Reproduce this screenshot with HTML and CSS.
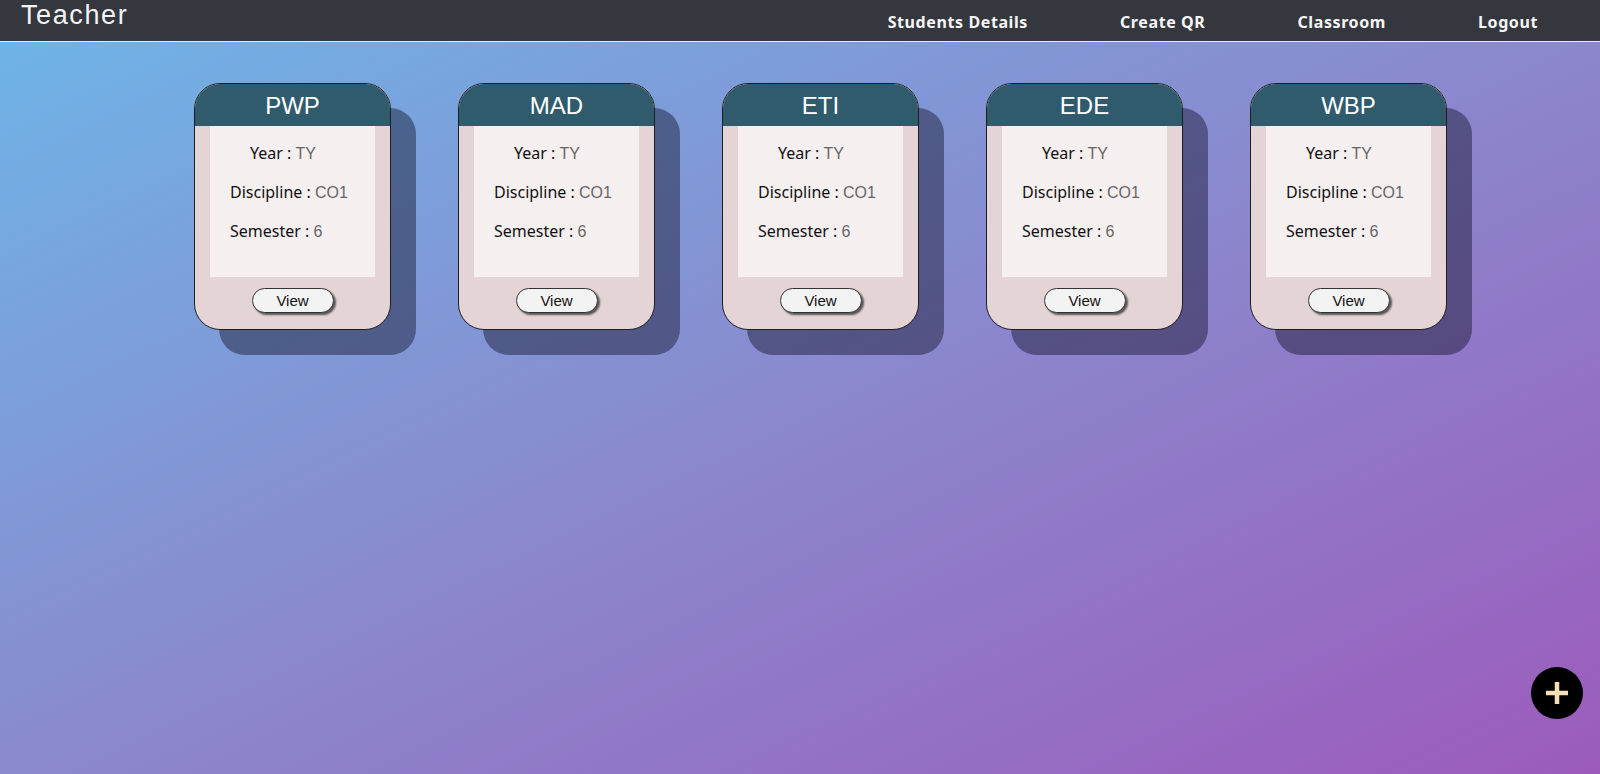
FILE: index.html
```html
<!DOCTYPE html>
<html>
<head>
<meta charset="utf-8">
<title>Teacher</title>
<link rel="stylesheet" href="styles.css">
</head>
<body>
<header class="navbar">
  <div class="brand">Teacher</div>
  <nav class="links">
    <a href="#">Students Details</a>
    <a href="#">Create QR</a>
    <a href="#">Classroom</a>
    <a href="#">Logout</a>
  </nav>
</header>
<main class="cards">
  <div class="card">
    <div class="card-head">PWP</div>
    <div class="card-panel">
      <p class="row row-year">Year : <span>TY</span></p>
      <p class="row">Discipline : <span>CO1</span></p>
      <p class="row">Semester : <span>6</span></p>
    </div>
    <div class="card-foot"><button class="view">View</button></div>
  </div>
  <div class="card">
    <div class="card-head">MAD</div>
    <div class="card-panel">
      <p class="row row-year">Year : <span>TY</span></p>
      <p class="row">Discipline : <span>CO1</span></p>
      <p class="row">Semester : <span>6</span></p>
    </div>
    <div class="card-foot"><button class="view">View</button></div>
  </div>
  <div class="card">
    <div class="card-head">ETI</div>
    <div class="card-panel">
      <p class="row row-year">Year : <span>TY</span></p>
      <p class="row">Discipline : <span>CO1</span></p>
      <p class="row">Semester : <span>6</span></p>
    </div>
    <div class="card-foot"><button class="view">View</button></div>
  </div>
  <div class="card">
    <div class="card-head">EDE</div>
    <div class="card-panel">
      <p class="row row-year">Year : <span>TY</span></p>
      <p class="row">Discipline : <span>CO1</span></p>
      <p class="row">Semester : <span>6</span></p>
    </div>
    <div class="card-foot"><button class="view">View</button></div>
  </div>
  <div class="card">
    <div class="card-head">WBP</div>
    <div class="card-panel">
      <p class="row row-year">Year : <span>TY</span></p>
      <p class="row">Discipline : <span>CO1</span></p>
      <p class="row">Semester : <span>6</span></p>
    </div>
    <div class="card-foot"><button class="view">View</button></div>
  </div>
</main>
<button class="fab" aria-label="Add">
  <svg width="26" height="26" viewBox="0 0 26 26"><path d="M13 2v22M2 13h22" stroke="#f5dfb5" stroke-width="4.5" fill="none"/></svg>
</button>
</body>
</html>
```
FILE: styles.css
```css
html, body {
  margin: 0;
  padding: 0;
  height: 100%;
}
body {
  background: linear-gradient(to bottom right, #6db6e7 0%, #8a89cf 50%, #9c5bbb 100%);
  font-family: "Noto Sans", "Open Sans", sans-serif;
  overflow: hidden;
}
.navbar {
  height: 41px;
  background: #35373f;
  border-bottom: 1px solid #e8e8e8;
  display: flex;
  align-items: flex-start;
  justify-content: space-between;
}
.brand {
  color: #f4f4f4;
  font-family: "Liberation Sans", Arial, sans-serif;
  font-size: 27px;
  line-height: 31px;
  margin-left: 21px;
  font-weight: 400;
  letter-spacing: 1.6px;
}
.links {
  display: flex;
  gap: 92px;
  padding-right: 62px;
  padding-top: 11px;
}
.links a {
  color: #f6f6f6;
  text-decoration: none;
  font-weight: 700;
  font-size: 16px;
  line-height: 22px;
  letter-spacing: 0.6px;
}
.cards {
  display: flex;
  gap: 67px;
  padding: 41px 0 0 194px;
}
.card {
  width: 195px;
  height: 245px;
  border: 1px solid #1e1e1e;
  border-radius: 26px;
  background: #e5d4d6;
  box-shadow: 25px 25px 0 rgba(10, 10, 30, 0.42);
  display: flex;
  flex-direction: column;
  overflow: hidden;
}
.card-head {
  height: 42px;
  background: #2f5b6c;
  color: #ffffff;
  font-family: "Liberation Sans", Arial, sans-serif;
  font-size: 24px;
  line-height: 44px;
  text-align: center;
}
.card-panel {
  margin: 0 15px;
  height: 151px;
  background: #f5eff0;
  padding-top: 15px;
  box-sizing: border-box;
}
.row {
  margin: 0 0 14px 0;
  padding-left: 20px;
  font-size: 16px;
  line-height: 24px;
  color: #111;
}
.row-year {
  padding-left: 40px;
}
.row span {
  font-family: "Liberation Sans", Arial, sans-serif;
  font-size: 16px;
  color: #666;
}
.card-foot {
  display: flex;
  justify-content: center;
  padding-top: 11px;
}
.view {
  width: 82px;
  height: 25px;
  border: 1px solid #333;
  border-radius: 13px;
  background: #f4f3f3;
  box-shadow: 2px 2px 2px #555;
  font-family: "Liberation Sans", Arial, sans-serif;
  font-size: 15px;
  color: #111;
  padding: 0;
}
.fab {
  position: fixed;
  right: 17px;
  bottom: 55px;
  width: 52px;
  height: 52px;
  border-radius: 50%;
  background: #000;
  border: none;
  display: flex;
  align-items: center;
  justify-content: center;
  padding: 0;
}
```
